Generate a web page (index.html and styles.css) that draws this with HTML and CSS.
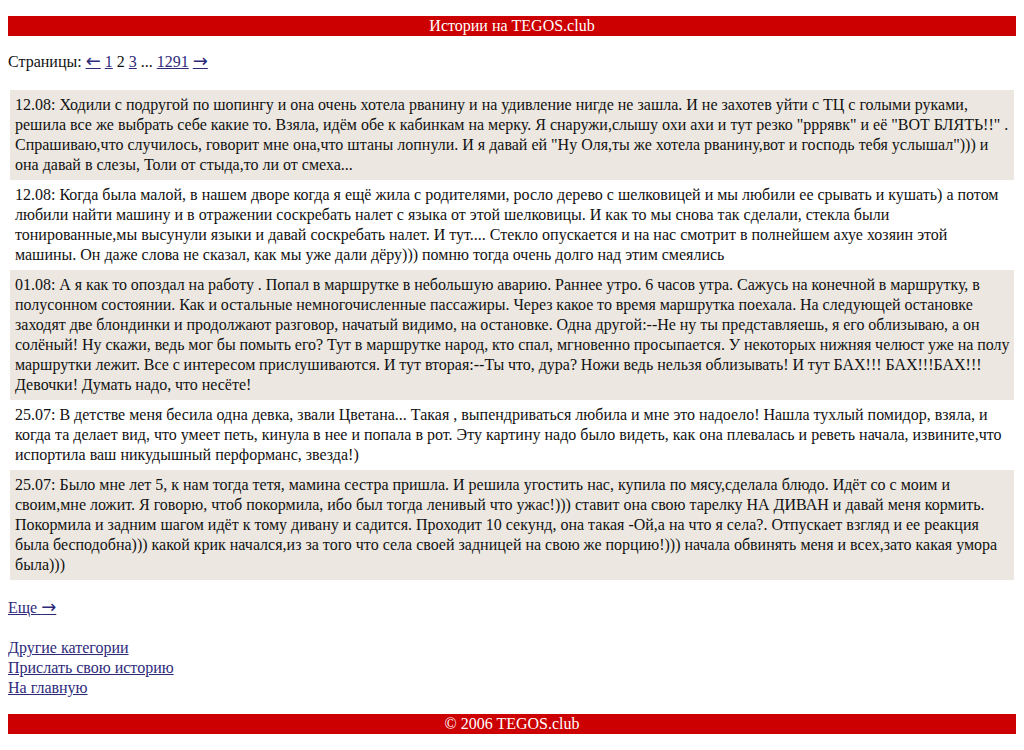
FILE: index.html
```html
<!DOCTYPE html>
<html lang="ru">
<head>
<meta charset="utf-8">
<title>Истории на TEGOS.club</title>
<link rel="stylesheet" href="styles.css">
</head>
<body>
<div class="bar">Истории на TEGOS.club</div>
<p class="pages">Страницы: <a href="#"><span class="arr">←</span></a> <a href="#">1</a> 2 <a href="#">3</a> ... <a href="#">1291</a> <a href="#"><span class="arr">→</span></a></p>
<div class="stories">
<div class="story alt">12.08: Ходили с подругой по шопингу и она очень хотела рванину и на удивление нигде не зашла. И не захотев уйти с ТЦ с голыми руками, решила все же выбрать себе какие то. Взяла, идём обе к кабинкам на мерку. Я снаружи,слышу охи ахи и тут резко "рррявк" и её "ВОТ БЛЯТЬ!!" . Спрашиваю,что случилось, говорит мне она,что штаны лопнули. И я давай ей "Ну Оля,ты же хотела рванину,вот и господь тебя услышал"))) и она давай в слезы, Толи от стыда,то ли от смеха...</div>
<div class="story">12.08: Когда была малой, в нашем дворе когда я ещё жила с родителями, росло дерево с шелковицей и мы любили ее срывать и кушать) а потом любили найти машину и в отражении соскребать налет с языка от этой шелковицы. И как то мы снова так сделали, стекла были тонированные,мы высунули языки и давай соскребать налет. И тут.... Стекло опускается и на нас смотрит в полнейшем ахуе хозяин этой машины. Он даже слова не сказал, как мы уже дали дёру))) помню тогда очень долго над этим смеялись</div>
<div class="story alt tight">01.08: А я как то опоздал на работу . Попал в маршрутке в небольшую аварию. Раннее утро. 6 часов утра. Сажусь на конечной в маршрутку, в полусонном состоянии. Как и остальные немногочисленные пассажиры. Через какое то время маршрутка поехала. На следующей остановке заходят две блондинки и продолжают разговор, начатый видимо, на остановке. Одна другой:--Не ну ты представляешь, я его облизываю, а он солёный! Ну скажи, ведь мог бы помыть его? Тут в маршрутке народ, кто спал, мгновенно просыпается. У некоторых нижняя челюст уже на полу маршрутки лежит. Все с интересом прислушиваются. И тут вторая:--Ты что, дура? Ножи ведь нельзя облизывать! И тут БАХ!!! БАХ!!!БАХ!!! Девочки! Думать надо, что несёте!</div>
<div class="story">25.07: В детстве меня бесила одна девка, звали Цветана... Такая , выпендриваться любила и мне это надоело! Нашла тухлый помидор, взяла, и когда та делает вид, что умеет петь, кинула в нее и попала в рот. Эту картину надо было видеть, как она плевалась и реветь начала, извините,что испортила ваш никудышный перформанс, звезда!)</div>
<div class="story alt">25.07: Было мне лет 5, к нам тогда тетя, мамина сестра пришла. И решила угостить нас, купила по мясу,сделала блюдо. Идёт со с моим и своим,мне ложит. Я говорю, чтоб покормила, ибо был тогда ленивый что ужас!))) ставит она свою тарелку НА ДИВАН и давай меня кормить. Покормила и задним шагом идёт к тому дивану и садится. Проходит 10 секунд, она такая -Ой,а на что я села?. Отпускает взгляд и ее реакция была бесподобна))) какой крик начался,из за того что села своей задницей на свою же порцию!))) начала обвинять меня и всех,зато какая умора была)))</div>
</div>
<p class="more"><a href="#">Еще <span class="arr">→</span></a></p>
<div class="links">
<a href="#">Другие категории</a>
<a href="#">Прислать свою историю</a>
<a href="#">На главную</a>
</div>
<div class="bar foot">© 2006 TEGOS.club</div>
</body>
</html>
```

FILE: styles.css
```css
html, body {
  background: #ffffff;
}
body {
  margin: 16px 8px 8px 8px;
  font-family: "Liberation Serif", "Times New Roman", serif;
  font-size: 16px;
  line-height: 20px;
  color: #111111;
}
a {
  color: #2e2a7a;
  text-decoration: underline;
}
.arr {
  font-family: "DejaVu Sans", sans-serif;
  font-size: 18px;
  line-height: 18px;
}
.bar {
  background: #cc0000;
  color: #ffffff;
  text-align: center;
  height: 20px;
  line-height: 20px;
}
.pages {
  margin: 16px 0 18px 0;
}
.stories {
  margin: 0 2px;
}
.story {
  padding: 5px 2px 5px 5px;
  background: #ffffff;
}
.story.alt {
  background: #ece8e1;
}
.story.tight {
  word-spacing: -0.15px;
}
.more {
  margin: 18px 0 20px 0;
}
.links {
  display: flex;
  flex-direction: column;
  align-items: flex-start;
  margin-bottom: 16px;
}
.foot {
  margin-top: 16px;
}
```
